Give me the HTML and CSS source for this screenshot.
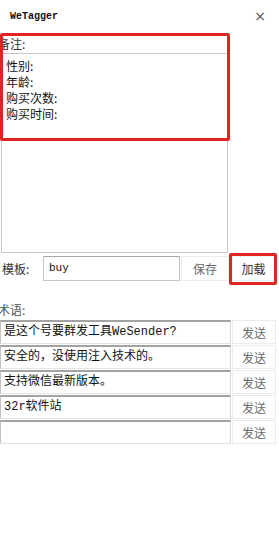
FILE: index.html
```html
<!DOCTYPE html>
<html lang="zh">
<head>
<meta charset="utf-8">
<title>WeTagger</title>
<link rel="stylesheet" href="styles.css">
</head>
<body>
<div class="window">
  <header class="titlebar">
    <span class="title">WeTagger</span>
    <span class="close">×</span>
  </header>

  <section class="notes">
    <div class="notes-label">备注:</div>
    <div class="notes-text">
      <div>性别:</div>
      <div>年龄:</div>
      <div>购买次数:</div>
      <div>购买时间:</div>
    </div>
    <div class="highlight notes-highlight"></div>
  </section>

  <div class="template-row">
    <span class="template-label">模板:</span>
    <div class="template-input">buy</div>
    <button class="btn btn-save">保存</button>
    <div class="load-wrap">
      <button class="btn btn-load">加载</button>
      <div class="highlight load-highlight"></div>
    </div>
  </div>

  <div class="phrases-label">术语:</div>
  <ul class="phrases">
    <li class="phrase"><div class="phrase-input">是这个号要群发工具WeSender?</div><button class="btn btn-send">发送</button></li>
    <li class="phrase"><div class="phrase-input">安全的，没使用注入技术的。</div><button class="btn btn-send">发送</button></li>
    <li class="phrase"><div class="phrase-input">支持微信最新版本。</div><button class="btn btn-send">发送</button></li>
    <li class="phrase"><div class="phrase-input">32r软件站</div><button class="btn btn-send">发送</button></li>
    <li class="phrase"><div class="phrase-input"></div><button class="btn btn-send">发送</button></li>
  </ul>
</div>
</body>
</html>
```

FILE: styles.css
```css
html, body {
  margin: 0;
  padding: 0;
  background: #ffffff;
}

body {
  font-family: "Liberation Mono", "Noto Sans CJK SC", monospace;
  font-size: 12px;
  color: #111;
}

.window {
  width: 279px;
  height: 558px;
  overflow: hidden;
  background: #fff;
}

.titlebar {
  height: 34px;
  display: flex;
  align-items: center;
  justify-content: space-between;
  padding: 0 13px 2px 10px;
  box-sizing: border-box;
}

.title {
  font-family: "Liberation Mono", monospace;
  font-size: 10px;
  font-weight: bold;
  color: #111;
}

.close {
  font-family: "DejaVu Sans", sans-serif;
  font-size: 14px;
  color: #555;
  line-height: 1;
}

.notes {
  position: relative;
  width: 228px;
  margin-top: 1px;
}

.notes-label {
  height: 18px;
  line-height: 18px;
  text-indent: -2px;
  color: #333;
  font-family: "Noto Sans CJK SC", sans-serif;
  font-size: 12px;
  border-bottom: 1px solid #c8c8c8;
  overflow: hidden;
}

.notes-text {
  height: 199px;
  margin-left: 1px;
  border-left: 1px solid #c8c8c8;
  border-right: 1px solid #c8c8c8;
  border-bottom: 1px solid #c8c8c8;
  padding: 4px 0 0 4px;
  box-sizing: border-box;
  font-family: "Noto Sans CJK SC", sans-serif;
  font-size: 12px;
  line-height: 16px;
  color: #111;
}

.highlight {
  position: absolute;
  border: 3px solid #e02424;
  border-radius: 2px;
  box-sizing: border-box;
  pointer-events: none;
}

.notes-highlight {
  left: 0;
  top: -2px;
  width: 230px;
  height: 108px;
}

.template-row {
  display: flex;
  align-items: center;
  height: 26px;
  margin-top: 2px;
}

.template-label {
  width: 43px;
  padding-left: 2px;
  box-sizing: border-box;
  font-family: "Noto Sans CJK SC", sans-serif;
  font-size: 12px;
  color: #333;
}

.template-input {
  width: 137px;
  height: 25px;
  box-sizing: border-box;
  border: 1px solid #c6c6c6;
  border-top-color: #a8a8a8;
  padding-left: 5px;
  line-height: 23px;
  font-family: "Liberation Mono", monospace;
  font-size: 11px;
  color: #111;
}

.btn {
  border: 1px solid #ececec;
  background: #fff;
  font-family: "Noto Sans CJK SC", sans-serif;
  font-size: 12px;
  color: #666;
  padding: 0;
  margin: 0;
  box-sizing: border-box;
}

.btn-save {
  width: 48px;
  height: 25px;
  margin-left: 1px;
}

.load-wrap {
  position: relative;
  margin-left: 3px;
  width: 43px;
  height: 25px;
}

.btn-load {
  width: 43px;
  height: 25px;
  color: #333;
  border-color: #e8f4fb;
}

.load-highlight {
  left: -3px;
  top: -3px;
  width: 48px;
  height: 32px;
}

.phrases-label {
  margin-top: 21px;
  height: 16px;
  line-height: 16px;
  text-indent: -2px;
  font-family: "Noto Sans CJK SC", sans-serif;
  font-size: 12px;
  color: #555;
  overflow: hidden;
}

.phrases {
  list-style: none;
  margin: 2px 0 0 0;
  padding: 0;
  display: flex;
  flex-direction: column;
  gap: 1px;
}

.phrase {
  display: flex;
  align-items: stretch;
  height: 24px;
}

.phrase-input {
  width: 231px;
  box-sizing: border-box;
  border-top: 2px solid #a3a3a3;
  border-left: 1px solid #c3c3c3;
  border-right: 1px solid #d8d8d8;
  border-bottom: 1px solid #e4e4e4;
  padding-left: 3px;
  line-height: 20px;
  font-family: "Liberation Mono", "Noto Sans CJK SC", monospace;
  font-size: 12px;
  color: #111;
  white-space: nowrap;
  overflow: hidden;
}

.btn-send {
  width: 44px;
  margin-left: 1px;
  color: #6a6a6a;
}
```
